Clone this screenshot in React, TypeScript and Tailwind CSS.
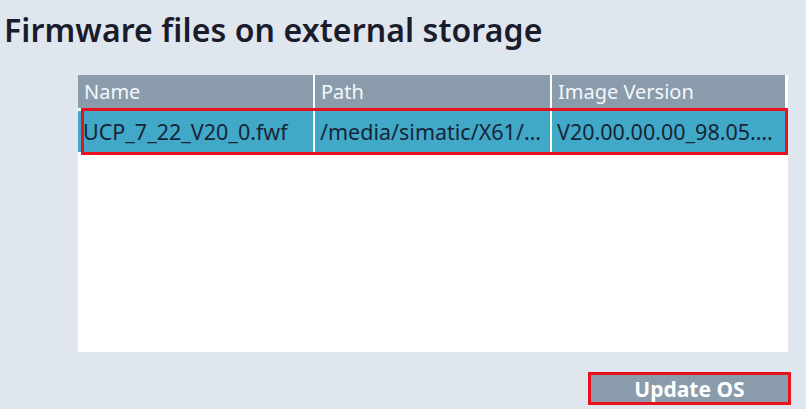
import React from 'react';

const columns = ['Name', 'Path', 'Image Version'];

const files = [
  {
    name: 'UCP_7_22_V20_0.fwf',
    path: '/media/simatic/X61/UCP_7_22_V20_0.fwf',
    version: 'V20.00.00.00_98.05.00.01',
  },
];

const colWidths = ['w-[235px]', 'w-[235px]', 'flex-1'];

export default function App() {
  return (
    <div
      className="w-[806px] h-[409px] bg-[#dfe6ee] overflow-hidden"
      style={{ fontFamily: '"Noto Sans", "Open Sans", sans-serif' }}
    >
      <h1 className="pl-[4px] pt-[9px] h-[75px] text-[32px] leading-[42px] font-semibold text-[#1a1c2c] tracking-[0.1px]">
        Firmware files on external storage
      </h1>

      <div className="ml-[78px] w-[710px] h-[277px] bg-white">
        <div className="w-[707px]">
          {/* header */}
          <div className="flex h-[33px] gap-[2px]">
            {columns.map((c, i) => (
              <div
                key={c}
                className={`${colWidths[i]} bg-[#8a9cab] text-[#f4f7fa] text-[20px] leading-[34px] pl-[6px] whitespace-nowrap overflow-hidden`}
              >
                {c}
              </div>
            ))}
          </div>

          {/* rows */}
          {files.map((f) => (
            <div key={f.name} className="relative flex h-[44px] gap-[2px] pt-[3px]">
              {[f.name, f.path, f.version].map((v, i) => (
                <div
                  key={i}
                  className={`${colWidths[i]} bg-[#41a8c8] text-[#172536] text-[21.5px] leading-[41px] pl-[5px] pr-[1px] whitespace-nowrap overflow-hidden text-ellipsis`}
                >
                  {v}
                </div>
              ))}
              <div className="absolute left-[3px] right-[-3px] top-0 bottom-[-3px] border-[3px] border-[#e8131f] pointer-events-none" />
            </div>
          ))}
        </div>
      </div>

      <div className="flex justify-end pr-[15px] pt-[20px]">
        <button className="w-[203px] h-[33px] bg-[#8a9cab] border-[3px] border-[#e8131f] text-white text-[21px] font-bold leading-[26px]">
          Update OS
        </button>
      </div>
    </div>
  );
}
